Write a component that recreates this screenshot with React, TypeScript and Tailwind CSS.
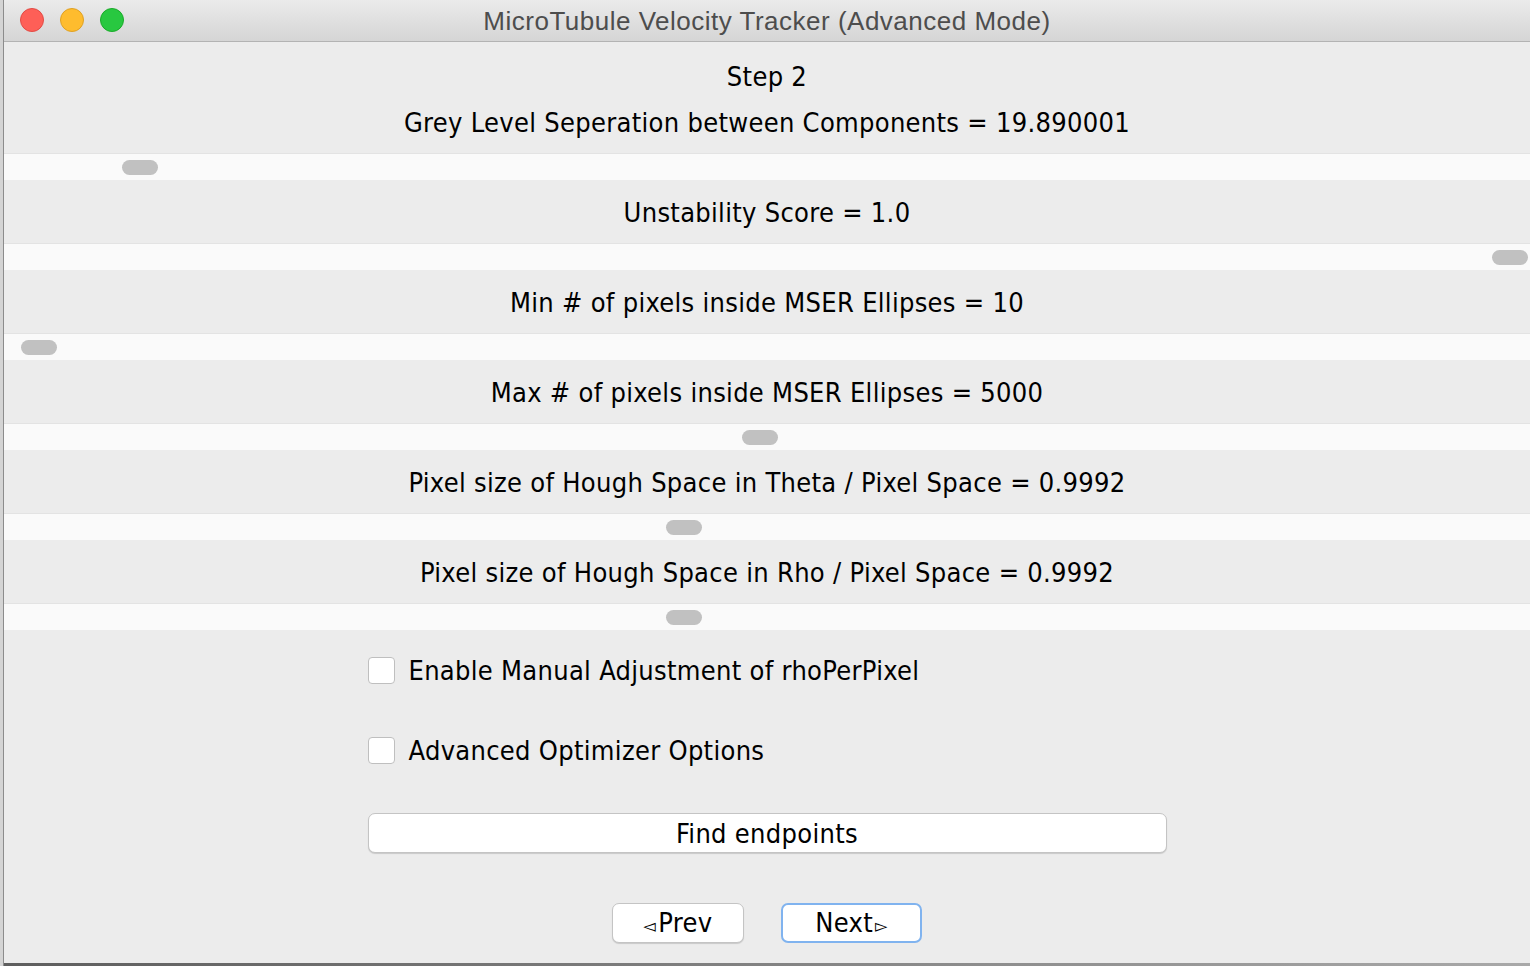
const sliders = [
  { label: "Unstability Score = 1.0", thumb: "ml-[1488px]" },
  { label: "Min # of pixels inside MSER Ellipses = 10", thumb: "ml-[17px]" },
  { label: "Max # of pixels inside MSER Ellipses = 5000", thumb: "ml-[738px]" },
  { label: "Pixel size of Hough Space in Theta / Pixel Space = 0.9992", thumb: "ml-[662px]" },
  { label: "Pixel size of Hough Space in Rho / Pixel Space = 0.9992", thumb: "ml-[662px]" },
];

const uiFont = "font-['DejaVu_Sans_Condensed','DejaVu_Sans',sans-serif] tracking-[0.3px]";

const SliderTrack = ({ thumb }: { thumb: string }) => (
  <div className="h-[27px] border-t border-[#e3e3e3] bg-[#fafafa] pt-[6px]">
    <div className={`${thumb} h-[15px] w-[36px] rounded-full bg-[#c1c1c1]`} />
  </div>
);

const Checkbox = ({ label }: { label: string }) => (
  <div className="flex h-[80px] items-center gap-[14px]">
    <div className="h-[27px] w-[27px] rounded-[4px] border border-[#bfbfbf] bg-white" />
    <span className="mt-[2px] text-[27px] text-black">{label}</span>
  </div>
);

const App = () => {
  return (
    <div className="flex h-[966px] w-[1530px] overflow-hidden bg-[#d4d4d4] pl-[3px]">
      <div className={`flex flex-1 flex-col border-l border-[#8c8c8c] bg-[#ececec] ${uiFont}`}>
        {/* title bar */}
        <div className="relative flex h-[42px] items-center justify-center rounded-tl-[6px] border-b border-[#b3b3b3] bg-gradient-to-b from-[#ebebeb] to-[#d5d5d5]">
          <div className="absolute left-[16px] top-[8px] flex gap-[16px]">
            <div className="h-[24px] w-[24px] rounded-full border border-[#e24b45] bg-[#fe5f57]" />
            <div className="h-[24px] w-[24px] rounded-full border border-[#dfa123] bg-[#febc2e]" />
            <div className="h-[24px] w-[24px] rounded-full border border-[#1aab29] bg-[#28c840]" />
          </div>
          <span className="mt-[1px] font-['Liberation_Sans',sans-serif] text-[26px] tracking-[0.5px] text-[#4d4d4d]">
            MicroTubule Velocity Tracker (Advanced Mode)
          </span>
        </div>

        {/* step header */}
        <div className="flex flex-col items-center pt-[12px] pb-[7px] text-[27px] leading-[46px] text-black">
          <span>Step 2</span>
          <span>Grey Level Seperation between Components = 19.890001</span>
        </div>
        <SliderTrack thumb="ml-[118px]" />

        {sliders.map((s) => (
          <div key={s.label}>
            <div className="flex h-[63px] items-center justify-center pt-[3px] text-[27px] text-black">
              {s.label}
            </div>
            <SliderTrack thumb={s.thumb} />
          </div>
        ))}

        <div className="mx-auto flex w-[799px] flex-col">
          <Checkbox label="Enable Manual Adjustment of rhoPerPixel" />
          <Checkbox label="Advanced Optimizer Options" />
          <button className="mt-[23px] h-[40px] rounded-[7px] border border-[#c4c4c4] bg-white text-[27px] text-black shadow-[0_1px_1px_rgba(0,0,0,0.15)]">
            Find endpoints
          </button>
        </div>

        <div className="mt-[50px] flex justify-center gap-[37px]">
          <button className="flex h-[40px] w-[132px] items-center justify-center rounded-[7px] border border-[#c4c4c4] bg-white text-[27px] text-black shadow-[0_1px_1px_rgba(0,0,0,0.15)]">
            <span className="mr-[2px] mt-[4px] text-[18px]">◅</span>Prev
          </button>
          <button className="flex h-[40px] w-[141px] items-center justify-center rounded-[7px] border-2 border-[#80b3ef] bg-white text-[27px] text-black">
            Next<span className="ml-[2px] mt-[4px] text-[18px]">▻</span>
          </button>
        </div>

        <div className="mt-auto h-[3px] bg-gradient-to-r from-[#5e5e5e] to-[#a9a9a9]" />
      </div>
    </div>
  );
};

export default App;
